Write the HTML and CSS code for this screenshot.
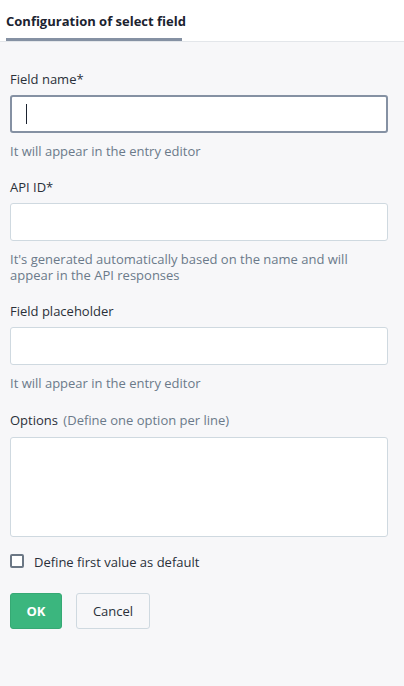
FILE: index.html
```html
<!DOCTYPE html>
<html>
<head>
<meta charset="utf-8">
<link rel="stylesheet" href="styles.css">
</head>
<body>
<div class="tabs">
  <div class="tab">Configuration of select field</div>
</div>
<form class="form">
  <div class="field">
    <label class="label">Field name*</label>
    <div class="input focused"><span class="caret"></span></div>
    <div class="help">It will appear in the entry editor</div>
  </div>
  <div class="field">
    <label class="label">API ID*</label>
    <div class="input"></div>
    <div class="help">It's generated automatically based on the name and will appear in the API responses</div>
  </div>
  <div class="field">
    <label class="label">Field placeholder</label>
    <div class="input"></div>
    <div class="help">It will appear in the entry editor</div>
  </div>
  <div class="field">
    <label class="label options">Options <span class="hint">(Define one option per line)</span></label>
    <div class="input textarea"></div>
  </div>
  <div class="check">
    <span class="box"></span>
    <span class="check-label">Define first value as default</span>
  </div>
  <div class="buttons">
    <button type="button" class="btn ok">OK</button>
    <button type="button" class="btn cancel">Cancel</button>
  </div>
</form>
</body>
</html>
```
FILE: styles.css
```css
html, body {
  margin: 0;
  padding: 0;
  background: #f7f7f9;
  font-family: "Open Sans", sans-serif;
  color: #2a3039;
}
.tabs {
  background: #fff;
  height: 41px;
  border-bottom: 1px solid #e3e6ea;
  padding-left: 6px;
  display: flex;
  align-items: flex-end;
}
.tab {
  font-size: 13px;
  font-weight: 700;
  color: #1b2330;
  height: 32px;
  padding-top: 3px;
  line-height: 31px;
  border-bottom: 3px solid #8591a3;
  width: 176px;
  white-space: nowrap;
}
.form {
  padding: 26px 16px 0 10px;
}
.field {
  display: flex;
  flex-direction: column;
}
.label {
  font-size: 13px;
  color: #2a3039;
  line-height: 16px;
  padding-top: 3px;
  margin-bottom: 8px;
}
.label.options {
  margin-top: 2px;
  margin-bottom: 9px;
}
.hint {
  color: #6b7a8a;
  margin-left: 2px;
}
.input {
  height: 36px;
  background: #fff;
  border: 1px solid #cfd9e0;
  border-radius: 3px;
  position: relative;
}
.input.focused {
  height: 34px;
  border: 2px solid #8591a3;
}
.caret {
  position: absolute;
  left: 14px;
  top: 7px;
  width: 1px;
  height: 20px;
  background: #1b2330;
}
.textarea {
  height: 98px;
}
.help {
  font-size: 13px;
  color: #6b7a8a;
  line-height: 16.5px;
  padding-top: 1px;
  margin-top: 9px;
  margin-bottom: 16px;
  padding-right: 30px;
}
.check {
  display: flex;
  align-items: center;
  height: 18px;
  margin-top: 15px;
}
.box {
  width: 10px;
  height: 10px;
  border: 2px solid #6b7785;
  border-radius: 2px;
  background: #fff;
}
.check-label {
  font-size: 13px;
  margin-left: 10px;
  color: #2a3039;
  position: relative;
  top: 1px;
}
.buttons {
  display: flex;
  gap: 14px;
  margin-top: 23px;
}
.btn {
  height: 36px;
  border-radius: 3px;
  font-family: inherit;
  font-size: 13px;
  padding: 0;
}
.ok {
  width: 52px;
  background: #3bb67e;
  border: 1px solid #36a974;
  color: #fff;
  font-weight: 700;
}
.cancel {
  width: 74px;
  background: #f7f7f9;
  border: 1px solid #cfd9e0;
  color: #2a3039;
}
```
